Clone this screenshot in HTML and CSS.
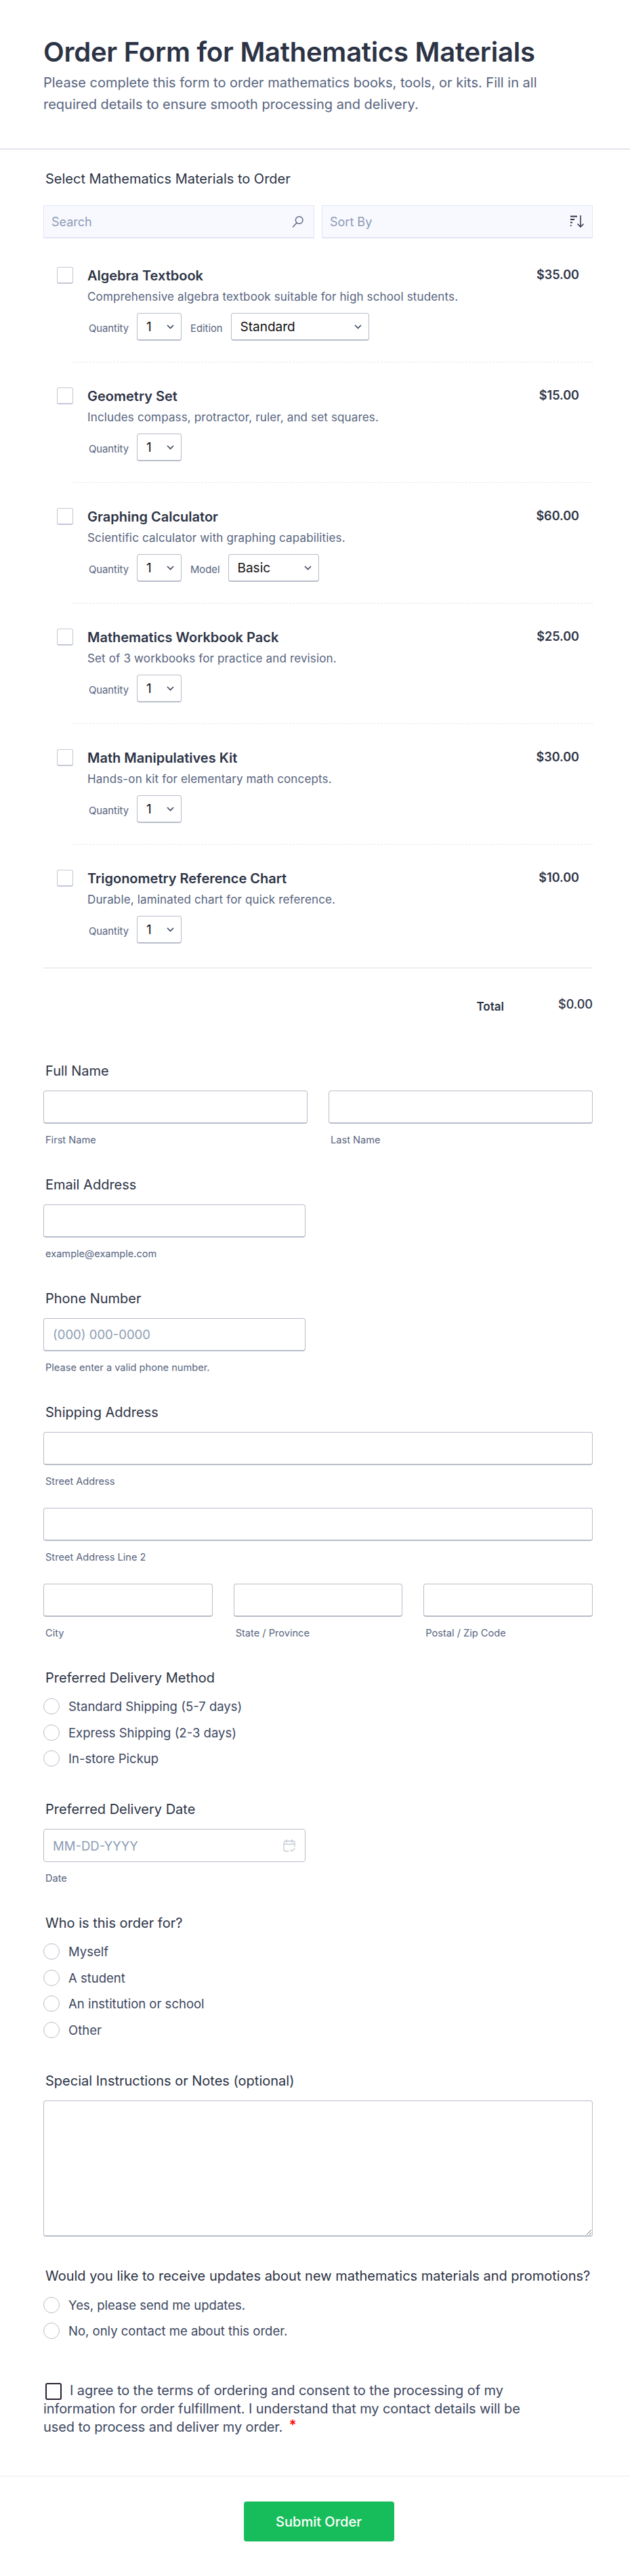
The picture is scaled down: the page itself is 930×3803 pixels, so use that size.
FILE: index.html
```html
<!DOCTYPE html>
<html lang="en">
<head>
    <meta charset="UTF-8">
    <meta name="viewport" content="width=device-width, initial-scale=1.0">
    <title>Order Form for Mathematics Materials</title>
    <link rel="stylesheet" href="styles.css">
</head>
<body>
    <header class="head">
        <h1>Order Form for Mathematics Materials</h1>
        <p>Please complete this form to order mathematics books, tools, or kits. Fill in all required details to ensure smooth processing and delivery.</p>
    </header>

    <form class="form">
        <div class="products">
            <div class="label products-label">Select Mathematics Materials to Order</div>

            <div class="tools">
                <div class="tool">
                    <span>Search</span>
                    <svg class="search-icon" width="17" height="17" viewBox="0 0 17 17" fill="none" stroke="#5a6583" stroke-width="1.4" stroke-linecap="round"><circle cx="10.700" cy="6" r="5.300"/><path d="M7 10 1.500 16"/></svg>
                </div>
                <div class="tool">
                    <span>Sort By</span>
                    <svg width="20" height="18" viewBox="0 0 20 18" fill="none" stroke="#2c3345" stroke-width="2"><path d="M0 1.500h10M0 6h6M0 10.500h3M0 15h1.500"/><path d="M15 0v17M10.500 12.500 15 17l4.500-4.500" stroke-width="1.500"/></svg>
                </div>
            </div>

            <div class="item">
                <input type="checkbox" class="check">
                <div class="item-body">
                    <div class="item-top"><span class="item-name">Algebra Textbook</span><span class="item-price">$35.00</span></div>
                    <div class="item-desc">Comprehensive algebra textbook suitable for high school students.</div>
                    <div class="item-opts">
                        <span class="opt-label">Quantity</span>
                        <select class="sel sel-qty"><option>1</option></select>
                        <span class="opt-label">Edition</span>
                        <select class="sel sel-edition"><option>Standard</option></select>
                    </div>
                </div>
            </div>

            <div class="item">
                <input type="checkbox" class="check">
                <div class="item-body">
                    <div class="item-top"><span class="item-name">Geometry Set</span><span class="item-price">$15.00</span></div>
                    <div class="item-desc">Includes compass, protractor, ruler, and set squares.</div>
                    <div class="item-opts">
                        <span class="opt-label">Quantity</span>
                        <select class="sel sel-qty"><option>1</option></select>
                    </div>
                </div>
            </div>

            <div class="item">
                <input type="checkbox" class="check">
                <div class="item-body">
                    <div class="item-top"><span class="item-name">Graphing Calculator</span><span class="item-price">$60.00</span></div>
                    <div class="item-desc">Scientific calculator with graphing capabilities.</div>
                    <div class="item-opts">
                        <span class="opt-label">Quantity</span>
                        <select class="sel sel-qty"><option>1</option></select>
                        <span class="opt-label">Model</span>
                        <select class="sel sel-model"><option>Basic</option></select>
                    </div>
                </div>
            </div>

            <div class="item">
                <input type="checkbox" class="check">
                <div class="item-body">
                    <div class="item-top"><span class="item-name">Mathematics Workbook Pack</span><span class="item-price">$25.00</span></div>
                    <div class="item-desc">Set of 3 workbooks for practice and revision.</div>
                    <div class="item-opts">
                        <span class="opt-label">Quantity</span>
                        <select class="sel sel-qty"><option>1</option></select>
                    </div>
                </div>
            </div>

            <div class="item">
                <input type="checkbox" class="check">
                <div class="item-body">
                    <div class="item-top"><span class="item-name">Math Manipulatives Kit</span><span class="item-price">$30.00</span></div>
                    <div class="item-desc">Hands-on kit for elementary math concepts.</div>
                    <div class="item-opts">
                        <span class="opt-label">Quantity</span>
                        <select class="sel sel-qty"><option>1</option></select>
                    </div>
                </div>
            </div>

            <div class="item item-last">
                <input type="checkbox" class="check">
                <div class="item-body">
                    <div class="item-top"><span class="item-name">Trigonometry Reference Chart</span><span class="item-price">$10.00</span></div>
                    <div class="item-desc">Durable, laminated chart for quick reference.</div>
                    <div class="item-opts">
                        <span class="opt-label">Quantity</span>
                        <select class="sel sel-qty"><option>1</option></select>
                    </div>
                </div>
            </div>

            <div class="total"><span class="total-label">Total</span><span class="total-value">$0.00</span></div>
        </div>

        <div class="field">
            <div class="label">Full Name</div>
            <div class="row-2">
                <div><input type="text" class="text"><div class="sub">First Name</div></div>
                <div><input type="text" class="text"><div class="sub">Last Name</div></div>
            </div>
        </div>

        <div class="field">
            <div class="label">Email Address</div>
            <div class="half"><input type="text" class="text"><div class="sub">example@example.com</div></div>
        </div>

        <div class="field">
            <div class="label">Phone Number</div>
            <div class="half"><input type="text" class="text" placeholder="(000) 000-0000"><div class="sub">Please enter a valid phone number.</div></div>
        </div>

        <div class="field">
            <div class="label">Shipping Address</div>
            <div class="address-line"><input type="text" class="text"><div class="sub">Street Address</div></div>
            <div class="address-line"><input type="text" class="text"><div class="sub">Street Address Line 2</div></div>
            <div class="row-3">
                <div><input type="text" class="text"><div class="sub">City</div></div>
                <div><input type="text" class="text"><div class="sub">State / Province</div></div>
                <div><input type="text" class="text"><div class="sub">Postal / Zip Code</div></div>
            </div>
        </div>

        <div class="field field-choices">
            <div class="label">Preferred Delivery Method</div>
            <div class="choices">
                <label class="choice"><input type="radio" name="delivery" class="radio">Standard Shipping (5-7 days)</label>
                <label class="choice"><input type="radio" name="delivery" class="radio">Express Shipping (2-3 days)</label>
                <label class="choice"><input type="radio" name="delivery" class="radio">In-store Pickup</label>
            </div>
        </div>

        <div class="field">
            <div class="label">Preferred Delivery Date</div>
            <div class="half">
                <div class="date">
                    <input type="text" class="date-input" placeholder="MM-DD-YYYY">
                    <svg width="18" height="20" viewBox="0 0 18 20" fill="none" stroke="#c5c9d6" stroke-width="1.300" stroke-linecap="round" stroke-linejoin="round"><path d="M8 18H3.500A2.500 2.500 0 0 1 1 15.500V5.500A2.500 2.500 0 0 1 3.500 3h11A2.500 2.500 0 0 1 17 5.500V11"/><path d="M1 7.500h16M5 1v4M13 1v4"/><path d="m11 16 2 2 4-4"/></svg>
                </div>
                <div class="sub">Date</div>
            </div>
        </div>

        <div class="field field-choices">
            <div class="label">Who is this order for?</div>
            <div class="choices">
                <label class="choice"><input type="radio" name="who" class="radio">Myself</label>
                <label class="choice"><input type="radio" name="who" class="radio">A student</label>
                <label class="choice"><input type="radio" name="who" class="radio">An institution or school</label>
                <label class="choice"><input type="radio" name="who" class="radio">Other</label>
            </div>
        </div>

        <div class="field">
            <div class="label">Special Instructions or Notes (optional)</div>
            <textarea class="notes"></textarea>
        </div>

        <div class="field field-updates">
            <div class="label">Would you like to receive updates about new mathematics materials and promotions?</div>
            <div class="choices choices-updates">
                <label class="choice"><input type="radio" name="updates" class="radio">Yes, please send me updates.</label>
                <label class="choice"><input type="radio" name="updates" class="radio">No, only contact me about this order.</label>
            </div>
        </div>

        <p class="agree"><input type="checkbox" class="agree-check">I agree to the terms of ordering and consent to the processing of my information for order fulfillment. I understand that my contact details will be used to process and deliver my order. <span class="star">*</span></p>
    </form>

    <footer class="foot">
        <button type="button" class="submit">Submit Order</button>
    </footer>
</body>
</html>
```

FILE: styles.css
```css
* {
    box-sizing: border-box;
}

body {
    margin: 0;
    background: #fff;
    color: #2c3345;
    font-family: Inter, "Liberation Sans", sans-serif;
}

.head {
    padding: 55px 64px 49px;
    border-bottom: 2px solid #e3e5ee;
}

h1 {
    margin: 0 0 7px;
    font-size: 40px;
    line-height: 44px;
    font-weight: 600;
    letter-spacing: -0.25px;
}

.head p {
    margin: 0;
    font-size: 20px;
    line-height: 32px;
    color: #57647e;
}

.form {
    padding: 33px 55px 0 64px;
}

.label {
    padding-left: 3px;
    margin-bottom: 19px;
    font-size: 20px;
    line-height: 20px;
    font-weight: 400;
    white-space: nowrap;
}

.products-label {
    margin-bottom: 29px;
}

.tools {
    display: grid;
    grid-template-columns: 1fr 1fr;
    gap: 11px;
    margin-bottom: 5px;
}

.tool {
    display: flex;
    align-items: center;
    justify-content: space-between;
    height: 49px;
    padding: 0 12px 0 11px;
    background: #f8f8ff;
    border: 1px solid #e3e5f5;
    border-bottom-width: 2px;
    font-size: 18px;
    color: #8d9cb4;
}

.search-icon {
    margin-right: 3px;
}

.item {
    display: flex;
    margin-left: 43px;
    padding: 37px 20px 31px 0;
    border-bottom: 1px dashed #e6e8f0;
}

.item-last {
    border-bottom: 0;
}

.check {
    appearance: none;
    flex: none;
    width: 24px;
    height: 25px;
    margin: 0 21px 0 -23px;
    background: #fff;
    border: 1px solid #c3c8d6;
    border-bottom-width: 2px;
    border-radius: 3px;
}

.item-body {
    flex: 1;
}

.item-top {
    display: flex;
    justify-content: space-between;
    align-items: flex-start;
    height: 26px;
}

.item-name {
    font-size: 20px;
    line-height: 26px;
    font-weight: 600;
}

.item-price {
    font-size: 18px;
    line-height: 24px;
    font-weight: 600;
}

.item-desc {
    margin-top: 6px;
    font-size: 17px;
    line-height: 24px;
    letter-spacing: 0.15px;
    color: #57647e;
}

.item-opts {
    display: flex;
    align-items: center;
    margin-top: 12px;
    padding-left: 2px;
}

.opt-label {
    margin: 4px 12px 0 0;
    font-size: 14.8px;
    color: #57647e;
}

.sel {
    appearance: none;
    height: 41px;
    padding: 0 0 0 13px;
    font-family: inherit;
    font-size: 19px;
    color: #111;
    border: 1px solid #b8bdc9;
    border-bottom-width: 2px;
    border-radius: 4px;
    background: #fff url("data:image/svg+xml,%3Csvg xmlns='http://www.w3.org/2000/svg' width='11' height='7' viewBox='0 0 11 7' fill='none' stroke='%23414b63' stroke-width='1.700'%3E%3Cpath d='m1 1 4.500 4.500L10 1'/%3E%3C/svg%3E") no-repeat;
    background-position: right 10px center;
    margin-right: 13px;
}

.sel-qty {
    width: 66px;
}

.sel-edition {
    width: 204px;
}

.sel-model {
    width: 134px;
}

.total {
    display: flex;
    justify-content: flex-end;
    margin-top: 4px;
    padding-top: 46px;
    border-top: 2px solid #eceef4;
    font-size: 17px;
    line-height: 20px;
    font-weight: 600;
}

.total-value {
    width: 131px;
    text-align: right;
    font-size: 18px;
    font-weight: 500;
    margin-top: -3px;
}

.products {
    margin-bottom: 75px;
}

.field {
    margin-bottom: 48px;
}

.field-choices {
    margin-bottom: 53px;
}

.field-updates {
    margin-bottom: 63px;
}

.row-2 {
    display: grid;
    grid-template-columns: 1fr 1fr;
    gap: 31px;
}

.row-3 {
    display: grid;
    grid-template-columns: 1fr 1fr 1fr;
    gap: 31px;
}

.half {
    width: 387px;
}

.address-line {
    margin-bottom: 31px;
}

.text {
    display: block;
    width: 100%;
    height: 49px;
    padding: 0 13px;
    font-family: inherit;
    font-size: 18.5px;
    color: #2c3345;
    background: #fff;
    border: 1px solid #b8bdc9;
    border-bottom-width: 2px;
    border-radius: 4px;
}

.text::placeholder,
.date-input::placeholder {
    color: #8d9cb4;
    opacity: 1;
}

.sub {
    margin-top: 16px;
    padding-left: 3px;
    font-size: 14.6px;
    line-height: 16px;
    color: #57647e;
}

.choices {
    display: flex;
    flex-direction: column;
    gap: 14.5px;
    margin-top: 20px;
}

.choices-updates {
    margin-top: 21px;
}

.choice {
    display: flex;
    align-items: center;
    height: 24px;
    font-size: 18.5px;
    color: #3d4760;
}

.radio {
    appearance: none;
    flex: none;
    width: 24px;
    height: 24px;
    margin: 0 13px 0 0;
    background: #fff;
    border: 1px solid #b8bdc9;
    border-radius: 50%;
}

.date {
    display: flex;
    align-items: center;
    justify-content: space-between;
    height: 49px;
    padding: 0 14px 0 13px;
    border: 1px solid #b8bdc9;
    border-radius: 4px;
}

.date-input {
    flex: 1;
    min-width: 0;
    padding: 0;
    border: 0;
    outline: 0;
    font-family: inherit;
    font-size: 18.5px;
}

.notes {
    display: block;
    width: 100%;
    height: 201px;
    border: 1px solid #b8bdc9;
    border-bottom-width: 2px;
    border-radius: 4px;
    resize: vertical;
    background: #fff;
}

.agree {
    width: 720px;
    margin: 0;
    font-size: 20px;
    line-height: 27px;
    letter-spacing: -0.09px;
    color: #3d4760;
}

.agree-check {
    appearance: none;
    width: 24px;
    height: 25px;
    margin: 0 12px 0 3px;
    vertical-align: middle;
    background: #fff;
    border: 2px solid #2c2030;
    border-radius: 3px;
}

.star {
    margin-left: 4px;
    color: #f00;
    font-weight: 600;
    line-height: 0;
    vertical-align: 3px;
}

.foot {
    display: flex;
    justify-content: center;
    margin-top: 58px;
    padding: 37px 0 49px 11px;
    border-top: 1px solid #e9ebf3;
}

.submit {
    width: 222px;
    height: 59px;
    border: 0;
    border-radius: 4px;
    background: #18bd5b;
    color: #fff;
    font-family: inherit;
    font-size: 20px;
    font-weight: 500;
}
```
